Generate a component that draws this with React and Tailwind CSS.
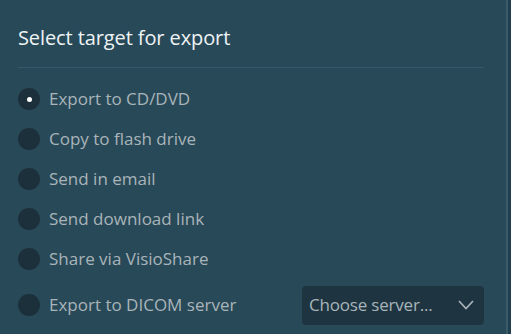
import React, { useState } from 'react';

const options = [
  'Export to CD/DVD',
  'Copy to flash drive',
  'Send in email',
  'Send download link',
  'Share via VisioShare',
];

function Radio({ checked }) {
  return (
    <span className="w-[22px] h-[22px] rounded-full bg-[#1b303b] flex items-center justify-center shrink-0">
      {checked && <span className="w-[5px] h-[5px] rounded-full bg-white" />}
    </span>
  );
}

export default function App() {
  const [selected, setSelected] = useState(0);

  return (
    <div
      className="w-[511px] h-[334px] bg-[#284957] flex overflow-hidden"
      style={{ fontFamily: '"Open Sans", "Noto Sans", sans-serif' }}
    >
      <div className="flex-1 flex flex-col pl-[18px] pr-[22px]">
        {/* Header */}
        <div className="h-[68px] flex items-center pt-[8px] border-b border-[#36596a]">
          <h2 className="text-[20px] text-[#eef3f5] tracking-[-0.1px]">Select target for export</h2>
        </div>

        {/* Options */}
        <div className="flex flex-col pt-[11px]">
          {options.map((label, i) => (
            <label
              key={label}
              onClick={() => setSelected(i)}
              className="h-[40px] flex items-center gap-[9px] cursor-pointer"
            >
              <Radio checked={selected === i} />
              <span className="text-[17px] text-[#a8b4ba]">{label}</span>
            </label>
          ))}

          <div className="h-[40px] mt-[6px] flex items-center justify-between">
            <label
              onClick={() => setSelected(5)}
              className="flex items-center gap-[9px] cursor-pointer"
            >
              <Radio checked={selected === 5} />
              <span className="text-[17px] text-[#a8b4ba]">Export to DICOM server</span>
            </label>
            <button className="w-[182px] h-[39px] rounded-[4px] bg-[#1e3541] flex items-center justify-between pl-[7px] pr-[10px]">
              <span className="text-[17px] text-[#a8b4ba] tracking-[-0.2px]">Choose server...</span>
              <svg width="16" height="10" viewBox="0 0 16 10" fill="none">
                <path d="M1 1l7 7.5 7-7.5" stroke="#a8b4ba" strokeWidth="1.7" />
              </svg>
            </button>
          </div>
        </div>
      </div>

      {/* Right edge */}
      <div className="w-[2px] bg-[#3a5b69]" />
      <div className="w-[3px] bg-[#213f4c]" />
    </div>
  );
}
